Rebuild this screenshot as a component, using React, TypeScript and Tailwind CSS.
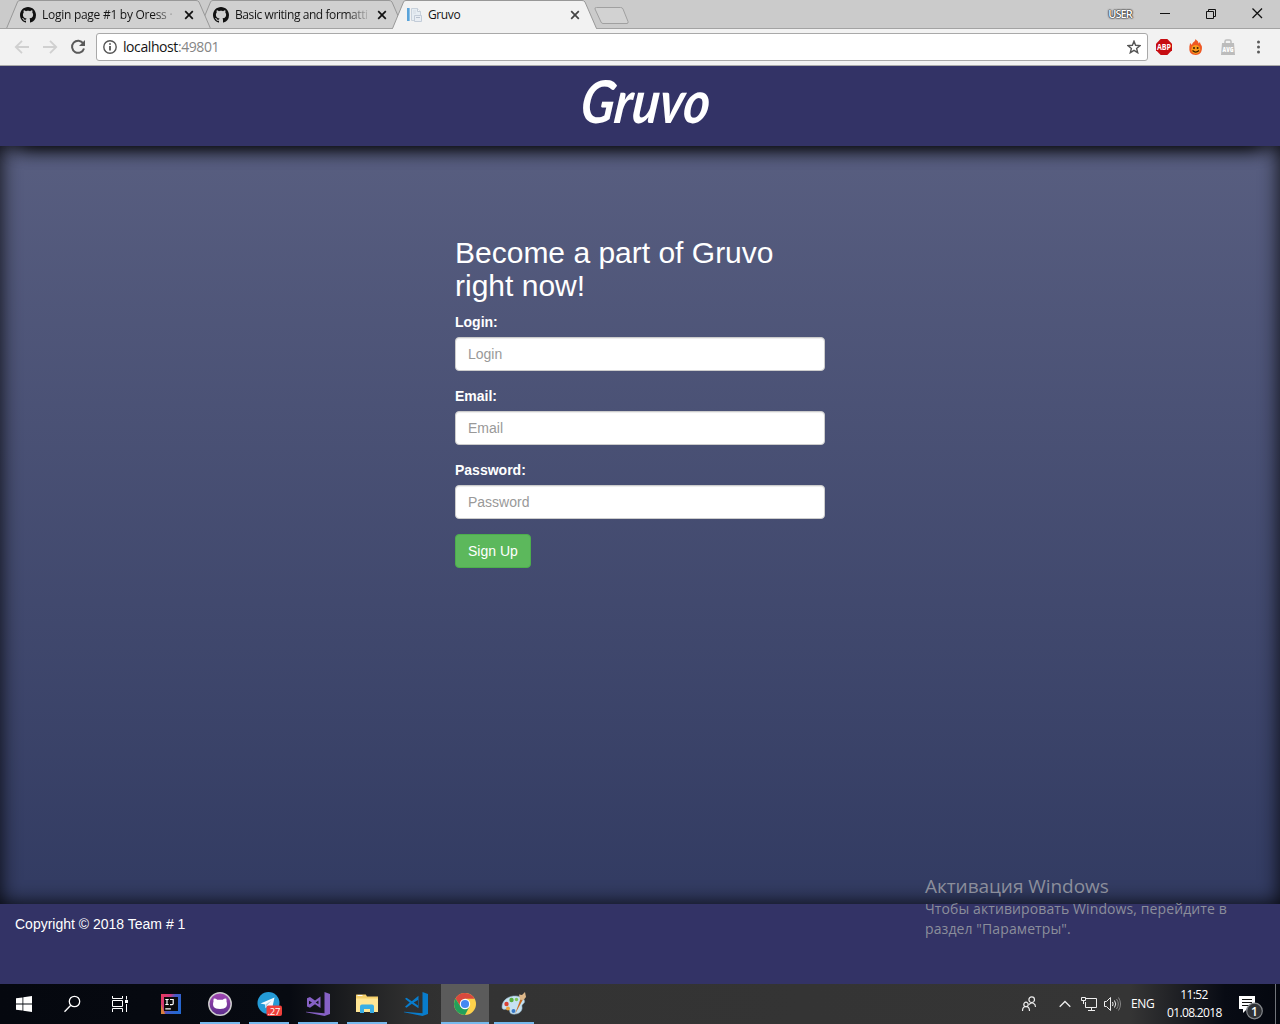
import React from "react";

const uiFont = "font-['Open_Sans','Noto_Sans',sans-serif]";

function OctocatMark() {
  return (
    <svg width="16" height="16" viewBox="0 0 16 16" className="shrink-0" fill="#111">
      <path d="M8 0C3.58 0 0 3.58 0 8c0 3.54 2.29 6.53 5.47 7.59.4.07.55-.17.55-.38 0-.19-.01-.82-.01-1.49-2.01.37-2.53-.49-2.69-.94-.09-.23-.48-.94-.82-1.13-.28-.15-.68-.52-.01-.53.63-.01 1.08.58 1.23.82.72 1.21 1.87.87 2.33.66.07-.52.28-.87.51-1.07-1.78-.2-3.64-.89-3.64-3.95 0-.87.31-1.59.82-2.15-.08-.2-.36-1.02.08-2.12 0 0 .67-.21 2.2.82.64-.18 1.32-.27 2-.27s1.36.09 2 .27c1.53-1.04 2.2-.82 2.2-.82.44 1.1.16 1.92.08 2.12.51.56.82 1.27.82 2.15 0 3.07-1.87 3.75-3.65 3.95.29.25.54.73.54 1.48 0 1.07-.01 1.93-.01 2.2 0 .21.15.46.55.38A8.01 8.01 0 0 0 16 8c0-4.42-3.58-8-8-8z" />
    </svg>
  );
}

function PageIcon() {
  return (
    <svg width="16" height="16" viewBox="0 0 16 16" className="shrink-0">
      <path d="M1 1h3v13H1z" fill="#5ba3d9" />
      <path d="M3 1h1v13H3z" fill="#8cc2e8" />
      <path d="M5.500 1.500h6l3 3v9h-9z" fill="#e6edf3" stroke="#c8d1db" />
      <path d="M11.500 1.500v3h3" fill="#f6f8fa" stroke="#c3ccd6" />
      <path d="M7 4h3M7 6h3" stroke="#d5dce4" />
      <path d="M8.500 8.500h7v6h-7z" fill="#e8edf3" stroke="#c3ccd8" />
      <path d="M10 10.500h4" stroke="#b8c2cf" />
    </svg>
  );
}

function TabClose({ active }: { active?: boolean }) {
  return (
    <svg width="10" height="10" viewBox="0 0 10 10" className="shrink-0" stroke={active ? "#444" : "#111"} strokeWidth="1.7">
      <path d="M1.2 1.2 8.800 8.800M8.800 1.200 1.200 8.800" />
    </svg>
  );
}

function Tab({ title, icon, active, layer, tracking }: { title: string; icon: React.ReactNode; active?: boolean; layer: string; tracking: string }) {
  return (
    <div className={`relative -mr-3 h-[29px] w-[205px] ${layer}`}>
      <svg className="absolute inset-0" width="205" height="29" viewBox="0 0 205 29">
        <path d="M.5 28.500 11.500 2Q12 .5 14 .5H190Q192 .5 193 2L204.500 28.500" fill={active ? "#f2f2f2" : "#d0d0d0"} stroke="#989898" />
        {active ? <path d="M1 28.500H204" stroke="#f2f2f2" /> : <path d="M0 28.500H205" stroke="#a3a3a3" />}
      </svg>
      <div className="relative flex h-full items-center pb-px pl-[14px] pr-[17px] pt-[2px]">
        {icon}
        <span className={`ml-[6px] mr-[6px] min-w-0 flex-1 whitespace-nowrap text-[12px] leading-4 text-[#151515] ${tracking} ${active ? "" : "[mask-image:linear-gradient(to_right,#000_calc(100%-24px),transparent)]"}`}>{title}</span>
        <TabClose active={active} />
      </div>
    </div>
  );
}

function BrowserChrome() {
  return (
    <header className={uiFont}>
      <div className="flex h-[29px] bg-[#cbcbcb] pl-[6px] shadow-[inset_0_-1px_0_#a3a3a3]">
        <Tab title="Login page #1 by Oress ·" icon={<OctocatMark />} layer="z-20" tracking="tracking-[-0.27px]" />
        <Tab title="Basic writing and formatti" icon={<OctocatMark />} layer="z-10" tracking="tracking-[-0.42px]" />
        <Tab title="Gruvo" icon={<PageIcon />} active layer="z-30" tracking="tracking-[-0.4px]" />
        <svg width="36" height="18" viewBox="0 0 36 18" className="ml-[9px] mt-[6px] shrink-0">
          <path d="M2.500 1.500H26.500Q28.500 1.500 29 3L34 15.500Q34.500 17.500 33 17.500H9Q7.500 17.500 7 16L1 3Q.5 1.500 2.500 1.500z" fill="#d2d2d2" stroke="#a0a0a0" />
        </svg>
        <div className="ml-auto flex items-start">
          <span className="mr-[28px] mt-[6px] text-[11px] font-semibold leading-4 tracking-[-0.9px] text-white [text-shadow:0_0_1px_#222,0_0_1px_#333,0_0_2px_#444,0_0_2px_#444]">USER</span>
          <svg width="103" height="12" viewBox="0 0 103 12" className="mr-[17px] mt-[7px]" fill="none" stroke="#111">
            <path d="M0 6.500h10M46.500 4.500h7v7h-7zM48.500 4.500v-2h7v7h-2" />
            <path d="M92.500 1.500l9.500 9.500M102 1.500 92.500 11" strokeWidth="1.300" />
          </svg>
        </div>
      </div>
      <div className="flex h-[37px] items-center border-b border-[#aaa] bg-[#f2f2f2]">
        <svg width="72" height="16" viewBox="0 0 72 16" className="ml-[14px] shrink-0" fill="none" strokeWidth="1.800">
          <path d="M15 8H2M8 1.800 1.800 8 8 14.200M29 8h13M36 1.800 42.200 8 36 14.200" stroke="#d0d0d0" />
          <path d="M69.200 4.300A6.100 6.100 0 1 0 70 9.500" stroke="#5a5a5a" strokeWidth="2" />
          <path d="M71 1v6h-6z" fill="#5a5a5a" />
        </svg>
        <div className="ml-[10px] flex h-7 w-[1052px] items-center rounded-[3px] border border-[#a9a9a9] bg-white pl-[6px] pr-[6px]">
          <svg width="14" height="14" viewBox="0 0 14 14" fill="none" stroke="#555" strokeWidth="1.400">
            <circle cx="7" cy="7" r="6.200" />
            <path d="M7 6v4.600M7 3.200v1.600" strokeWidth="1.800" />
          </svg>
          <span className="ml-[6px] text-[14px] leading-5 tracking-[-0.42px] text-[#151515]">localhost<span className="text-[#858585]">:49801</span></span>
          <svg width="14" height="14" viewBox="0 0 14 14" className="ml-auto" fill="none" stroke="#555" strokeWidth="1.400">
            <path d="M7 1.200 8.600 5.300 13 5.600 9.600 8.400 10.700 12.700 7 10.300 3.300 12.700 4.400 8.400 1 5.600 5.400 5.300z" />
          </svg>
        </div>
        <svg width="16" height="16" viewBox="0 0 16 16" className="ml-2 shrink-0 overflow-visible">
          <path d="M4.700 0h6.600L16 4.700v6.600L11.300 16H4.700L0 11.300V4.700z" fill="#c70d12" />
          <text x="8" y="11" textAnchor="middle" fontSize="8.500" fontWeight="700" fill="#fff" textLength="14" lengthAdjust="spacingAndGlyphs">ABP</text>
        </svg>
        <svg width="14" height="17" viewBox="0 0 14 17" className="ml-[17px] shrink-0">
          <path d="M6.500 0C8 1.800 9.500 2.300 9.500 4.500L11 3c.2 2 .8 2.200 1.800 4 .8 5-1.300 9-6 9S0 13 .4 9c-.3-2 .7-3 .6-5l2 2c.3-3 3.300-3 3.500-6z" fill="#ef5824" />
          <circle cx="6.700" cy="10.400" r="4.500" fill="#f99a1c" />
          <circle cx="5" cy="9" r="1" fill="#3d1c00" /><circle cx="8.600" cy="9" r="1" fill="#3d1c00" />
          <path d="M3.500 11.500Q6.800 14.700 10 11.500" fill="none" stroke="#3d1c00" strokeWidth="1.200" />
        </svg>
        <svg width="14" height="17" viewBox="0 0 14 17" className="ml-[18px] shrink-0">
          <path d="M4 4.500V2.500q0-1.500 1.500-1.500h3q1.500 0 1.500 1.500v2" fill="none" stroke="#bcbcbc" strokeWidth="1.500" />
          <path d="M1 4h12l1 12H0z" fill="#bcbcbc" />
          <text x="7" y="12.500" textAnchor="middle" fontSize="6" fontWeight="800" fill="#fff" textLength="11" lengthAdjust="spacingAndGlyphs">AVG</text>
        </svg>
        <svg width="4" height="14" viewBox="0 0 4 14" className="ml-[21px] shrink-0" fill="#5a5a5a">
          <circle cx="2.500" cy="2" r="1.500" /><circle cx="2.500" cy="7" r="1.500" /><circle cx="2.500" cy="12" r="1.500" />
        </svg>
      </div>
    </header>
  );
}

function Field({ label }: { label: string }) {
  return (
    <div className="mb-[15px]">
      <label className="mb-[5px] block text-[14px] font-bold leading-5">{label}:</label>
      <input
        placeholder={label}
        className="block h-[34px] w-full rounded-[4px] border border-[#ccc] bg-white px-3 py-[6px] text-[14px] leading-5 shadow-[inset_0_1px_1px_rgba(0,0,0,0.075)] placeholder:text-[#999]"
      />
    </div>
  );
}

function Task({ children, running, active }: { children: React.ReactNode; running?: boolean; active?: boolean }) {
  return (
    <div className={`mr-px flex h-10 w-12 flex-col items-center ${active ? "bg-[#5b5b5b]" : ""}`}>
      <div className="flex h-[38px] items-center pt-[2px]">{children}</div>
      {running && <div className={`h-[2px] bg-[#76b9ed] ${active ? "w-12" : "w-10"}`} />}
    </div>
  );
}

function Taskbar() {
  return (
    <div className={`flex h-10 bg-[linear-gradient(to_right,#05080f_0,#070a11_290px,#1d1e20_350px,#2f2f2f_410px,#333_480px,#353535_1130px,#202125_1175px,#080b14_1225px,#04070f_100%)] ${uiFont}`}>
      <div className="flex">
        <div className="flex w-12 items-center justify-center">
          <svg width="16" height="16" viewBox="0 0 16 16" fill="#fff"><path d="M0 2.300 6.500 1.400v6.200H0zM7.300 1.300 16 0v7.600H7.300zM0 8.400h6.500v6.200L0 13.700zM7.300 8.400H16V16l-8.700-1.300z" /></svg>
        </div>
        <div className="flex w-12 items-center justify-center">
          <svg width="18" height="18" viewBox="0 0 18 18" fill="none" stroke="#fff" strokeWidth="1.300"><circle cx="11.500" cy="6.500" r="5.200" /><path d="M7.800 10.300 1.500 16.800" /></svg>
        </div>
        <div className="mr-[3px] flex w-12 items-center justify-center">
          <svg width="16" height="16" viewBox="0 0 16 16" fill="none" stroke="#fff"><path d="M.5 0v2.500h10V0M.5 4.500h10v6H.5zM.5 16v-3.500h10V16M14.500 0v3.500M14.500 8v8" /><path d="M13 4h3v3h-3z" fill="#fff" stroke="none" /></svg>
        </div>
        <Task>
          <svg width="20" height="20" viewBox="0 0 20 20">
            <defs><linearGradient id="ij" x1="0" y1="0" x2="1" y2=".5"><stop stopColor="#ee3a5a" /><stop offset=".4" stopColor="#c9387f" /><stop offset=".6" stopColor="#4759c5" /><stop offset="1" stopColor="#2467cf" /></linearGradient></defs>
            <path d="M0 0h20v20H0z" fill="url(#ij)" /><path d="M0 10 4 20H0z" fill="#d9803c" /><path d="M3 3h14v14H3z" fill="#0a0a0a" />
            <path d="M4.300 5.500h3.400M6 5.500v5M4.300 10.500h3.400M9 5.500h3.200v4q0 1.200-1.200 1.200H9M4.300 14.800h5.500" fill="none" stroke="#fff" strokeWidth="1.200" />
          </svg>
        </Task>
        <Task running>
          <svg width="24" height="24" viewBox="0 0 24 24"><defs><linearGradient id="gd" x2="0" y2="1"><stop stopColor="#a347b3" /><stop offset="1" stopColor="#5b2e8c" /></linearGradient></defs><circle cx="12" cy="12" r="11.200" fill="url(#gd)" stroke="#ccc" strokeWidth="1.500" /><path d="M5.800 6.500q2-.2 3.500 1.200h5.400q1.500-1.400 3.500-1.200.6 1.700.3 3c1.400 4.500-.2 7.500-6.500 7.500s-7.900-3-6.500-7.500q-.3-1.300.3-3z" fill="#fff" /></svg>
        </Task>
        <Task running>
          <svg width="26" height="26" viewBox="0 0 26 26"><circle cx="12.500" cy="12" r="11" fill="#249bd7" /><path d="m4.500 12.500 14-6-2.600 12-4.400-3.200-2 2-.4-3.700z" fill="#f5fbff" /><path d="m9.500 13.500 6-4-4.500 5-.6 2.500z" fill="#a9cfe6" /><rect x="10.500" y="14.500" width="15.500" height="10.500" rx="2" fill="#ef3f3b" /><text x="18" y="23.500" textAnchor="middle" fontSize="9.500" fill="#fff" textLength="13">.27</text></svg>
        </Task>
        <Task running>
          <svg width="24" height="24" viewBox="0 0 24 24" fill="#8661c5"><path d="M18.500 0 24 2v20l-5.500 2L0 20.200v-.5l18.500 1.500z" /><path fillRule="evenodd" d="M1 6.200 4 5l5 3.500L14.500 4.600v11.400L9 12.200 4 15.700 1 14.500zm2 2.600v3.700l3-1.900zm9.500-.3-2.800 1.900 2.800 1.900z" /></svg>
        </Task>
        <Task running>
          <svg width="22" height="20" viewBox="0 0 22 20"><path d="M0 2V1Q0 .5.5.5h9.300l1.200 2h11V18H0z" fill="#f5cf6a" /><path d="M0 4.500h22V18H0z" fill="#ffe695" /><path d="M1.500 1.500h5" stroke="#fff" /><path d="M4 19v-6.500q0-2 2-2h10q2 0 2 2V19h-4v-4H8v4z" fill="#39aee5" /></svg>
        </Task>
        <Task>
          <svg width="24" height="24" viewBox="0 0 24 24" fill="#087ccc"><path d="M18.500 0 24 2v20l-5.500 2L0 20.200v-.5l18.500 1.500z" /><path fillRule="evenodd" d="m1 6.800 1.500-1 5.300 3.400L14.500 3.800v12.400L7.800 11.800l-5.300 4-1.500-1 4.700-4.300zm13 1.300-4.300 2.400 4.300 3z" /></svg>
        </Task>
        <Task running active>
          <svg width="24" height="24" viewBox="0 0 24 24"><circle cx="12" cy="12" r="11" fill="#fdd14b" /><path d="M2.500 6.500A11 11 0 0 1 21.600 6.800H12L7.500 14.600z" fill="#d9493e" /><path d="M2.500 6.500 7.500 14.600 12 17l4.500-2.400L12 23A11 11 0 0 1 2.500 6.500z" fill="#23a05b" /><circle cx="12" cy="12" r="5.200" fill="#fff" /><circle cx="12" cy="12" r="4.100" fill="#4588f1" /></svg>
        </Task>
        <Task running>
          <svg width="26" height="26" viewBox="0 0 26 26"><path d="M1 16C1 9 8 4.500 15 5s11 5 7 8c-2 1.600-.5 2.500-1 5-1 5-8 6-11 4.500-2-1-.5-3-2.500-4S1 20 1 16z" fill="#c6e2f2" stroke="#8dabc0" strokeWidth=".6" /><circle cx="10.500" cy="9" r="2.200" fill="#57ac3c" /><circle cx="5.500" cy="13" r="2.200" fill="#d94335" /><circle cx="15.500" cy="8.500" r="1.700" fill="#7ec65a" /><circle cx="7" cy="17.500" r="1.900" fill="#eda63a" /><circle cx="12.500" cy="20" r="2" fill="#3878c6" /><path d="m14 23 5.500-15 2.300.8z" fill="#ca6b21" /><path d="m19 8.500-1-5 3 .5L24 1l1 5-2.500 3z" fill="#ddb789" /></svg>
        </Task>
      </div>
      <div className="ml-auto flex items-center text-white">
        <svg width="16" height="16" viewBox="0 0 16 16" className="mr-[22px]" fill="none" stroke="#eee" strokeWidth="1.200"><circle cx="10.700" cy="3.700" r="2.800" /><circle cx="5" cy="8.400" r="2.200" /><path d="M1.500 15c0-6 7-6 7 0M8 8.500c3-2.800 6.500-1.500 6.500 2.500" /></svg>
        <svg width="12" height="8" viewBox="0 0 12 8" fill="none" stroke="#eee" strokeWidth="1.300"><path d="m.7 6.800 5.300-5.300 5.300 5.300" /></svg>
        <svg width="16" height="16" viewBox="0 0 16 16" className="ml-[10px]" fill="none" stroke="#eee"><path d="M5 2.500h10.500v9H4.500V6M10.500 11.500v3M7 14.500h7M.5 1.500h4v3h-4zM2.500 5v3" /></svg>
        <svg width="17" height="14" viewBox="0 0 17 14" className="ml-[7px]" fill="none" stroke="#eee"><path d="M.5 4.500h2l4-4v13l-4-4h-2zM8.500 5q1.200 2 0 4M10.500 3.500q2.500 3.500 0 7" /><path d="M12.500 2q3.600 5 0 10M14.500.5q4 6.500 0 13" stroke="#888" /></svg>
        <span className="ml-[10px] w-6 text-[12px] leading-4 tracking-[-0.4px]">ENG</span>
        <div className="ml-[12px] w-[54px] whitespace-nowrap pt-px text-[12px] leading-[18px] tracking-[-0.65px]">
          <div className="-mt-px text-center">11:52</div><div className="text-center">01.08.2018</div>
        </div>
        <svg width="25" height="26" viewBox="0 0 25 26" className="ml-[17px] mt-[6px]"><path d="M1 2h16v13H9l-4 4v-4H1z" fill="#fff" /><path d="M4 5.500h10M4 8.500h10M4 11.500h8" stroke="#111" /><circle cx="16.500" cy="17" r="7.800" fill="#303236" stroke="#85888c" strokeWidth="1.200" /><text x="16.500" y="21.500" textAnchor="middle" fontSize="12" fontWeight="600" fill="#fff">1</text></svg>
        <div className="ml-[12px] mr-1 h-10 w-px bg-[#71747a]" />
      </div>
    </div>
  );
}

export default function App() {
  return (
    <div className="relative flex h-[1024px] w-[1280px] flex-col overflow-hidden font-['Liberation_Sans',sans-serif]">
      <BrowserChrome />
      <div className="relative z-10 h-20 shrink-0 bg-[#333366] shadow-[0_20px_20px_-20px_#000]">
        <svg width="160" height="76" viewBox="0 0 160 76" className="mx-auto overflow-visible">
          <text transform="translate(19 57) skewX(-7)" fontSize="59" fontWeight="700" fontStyle="italic" fill="#fff" textLength="129" lengthAdjust="spacingAndGlyphs" className="font-['Lato',sans-serif]">Gruvo</text>
        </svg>
      </div>
      <main className="flex h-[758px] shrink-0 justify-center bg-[linear-gradient(#585e80,#323b62)] pt-[90px] text-white shadow-[inset_0_0_20px_rgba(0,0,0,0.9)]">
        <form className="w-[370px]">
          <h2 className="mb-[10px] text-[30px] font-normal leading-[33px]">Become a part of Gruvo right now!</h2>
          <Field label="Login" />
          <Field label="Email" />
          <Field label="Password" />
          <button type="button" className="h-[34px] rounded-[4px] border border-[#4cae4c] bg-[#5cb85c] px-3 text-[14px] leading-5">Sign Up</button>
        </form>
      </main>
      <footer className="h-20 shrink-0 bg-[#333366] px-[15px] pt-[10px] text-[14px] leading-5 text-white">Copyright © 2018 Team # 1</footer>
      <Taskbar />
      <div className={`absolute left-[925px] top-[873px] whitespace-nowrap text-[#8b8e9b] ${uiFont}`}>
        <div className="text-[19px] leading-[26px] tracking-[-0.05px]">Активация Windows</div>
        <div className="text-[14px] leading-5 tracking-[0.1px]">Чтобы активировать Windows, перейдите в<br />раздел "Параметры".</div>
      </div>
    </div>
  );
}
